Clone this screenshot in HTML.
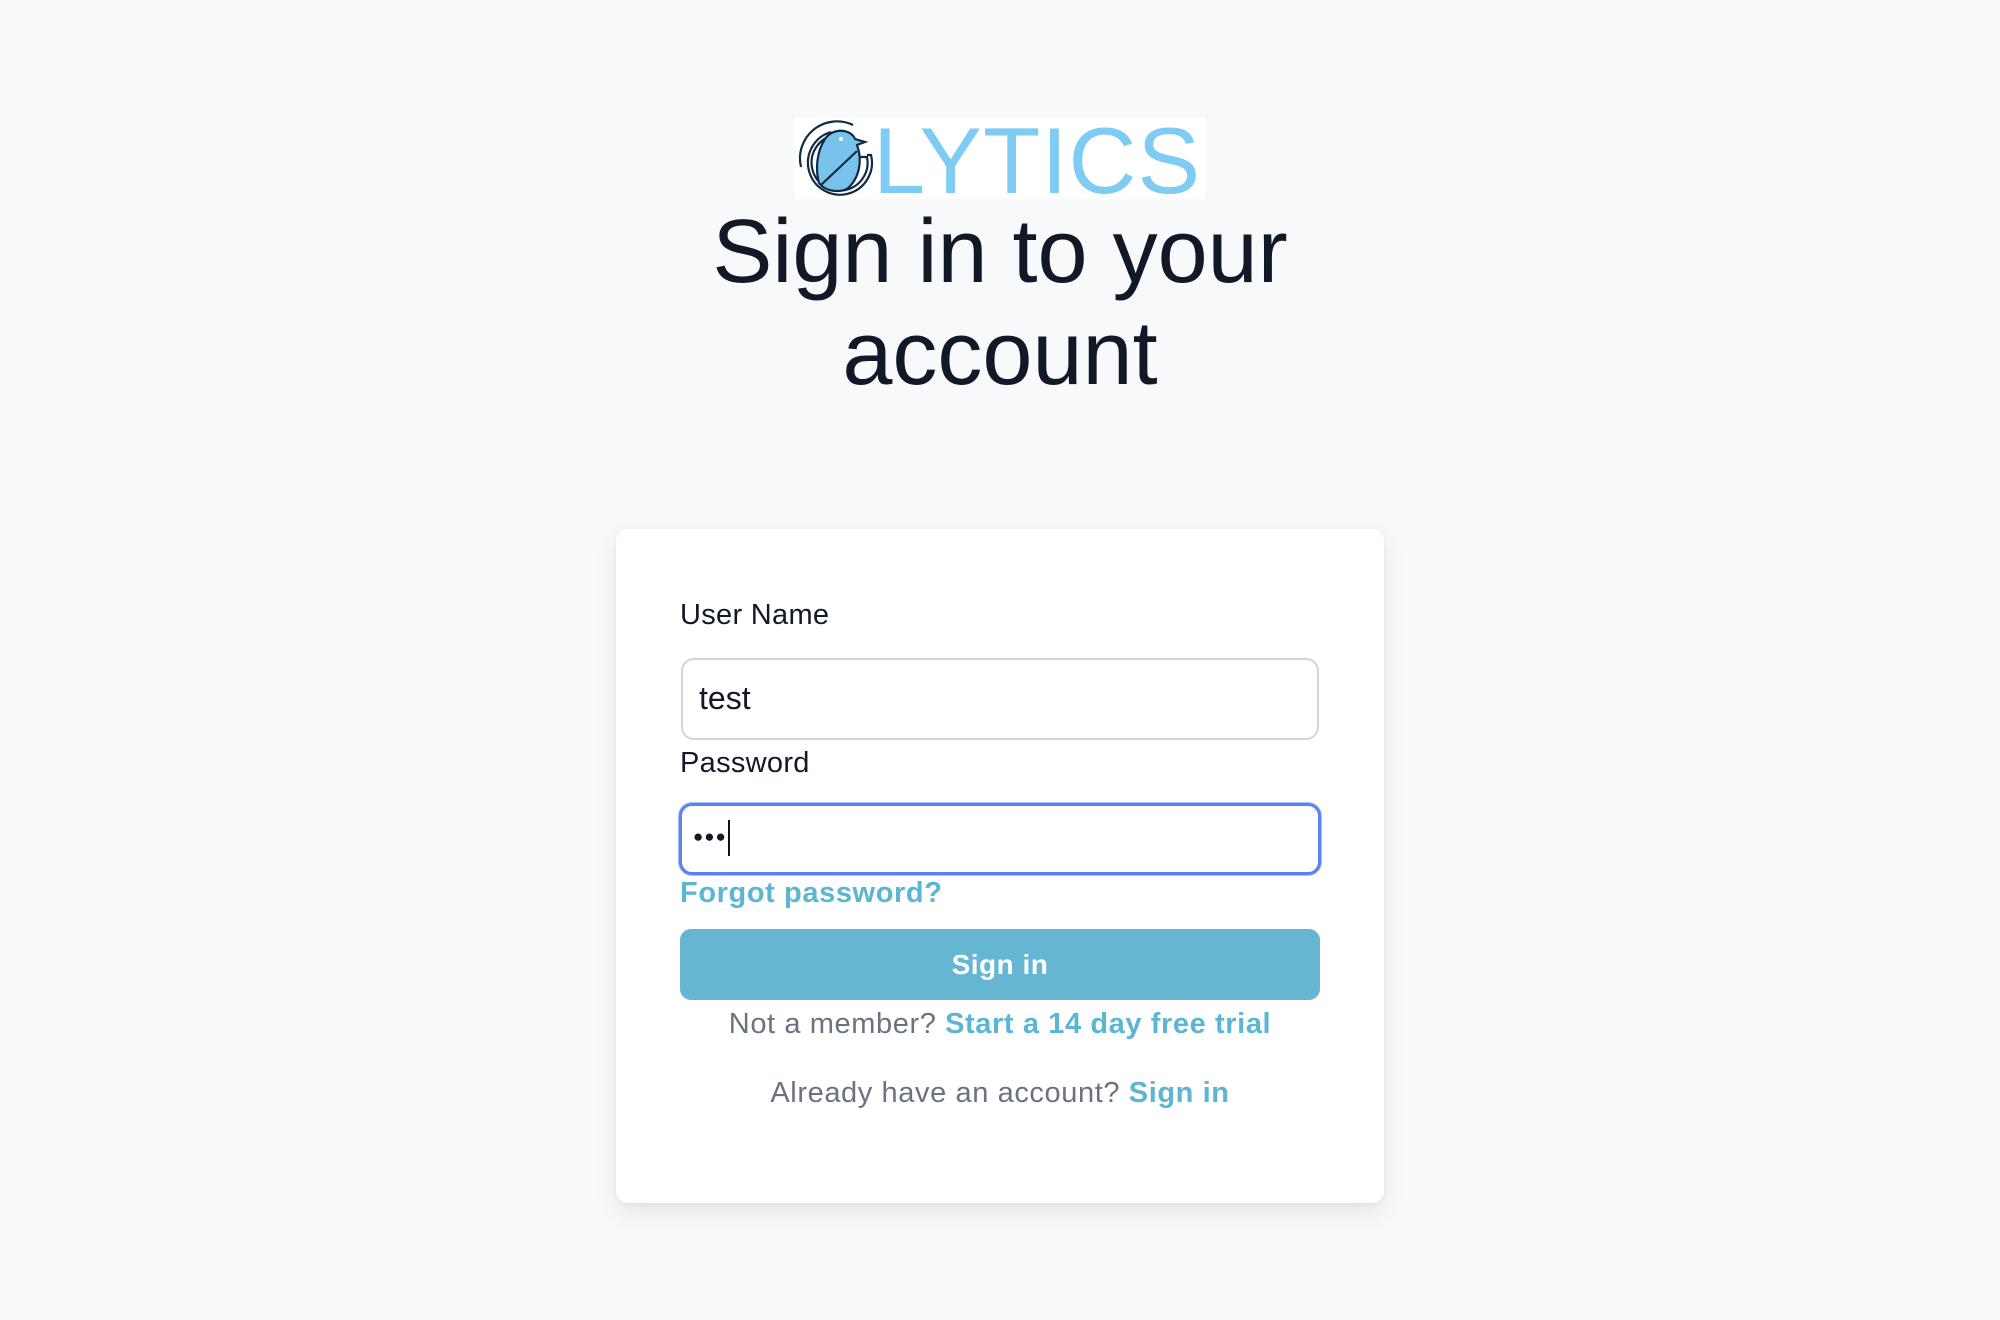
<!DOCTYPE html>
<html><head><meta charset="utf-8"><style>
html,body{margin:0;padding:0;width:2000px;height:1320px;background:#f8f9fb;font-family:"Liberation Sans",Arial,sans-serif;overflow:hidden}
.logo{position:absolute;left:795px;top:117px;width:410px;height:82px;background:#fff}
.logo svg{position:absolute;left:0;top:-2px}
.logo .t{position:absolute;left:78px;top:-6px;font-size:94px;color:#7ecbf3;line-height:100px;letter-spacing:1px}
h1{position:absolute;left:0;width:2000px;top:201px;margin:0;text-align:center;font-weight:400;font-size:90px;line-height:102px;color:#111827}
.card{position:absolute;left:616px;top:529px;width:768px;height:674px;background:#fff;border-radius:12px;box-shadow:0 10px 25px rgba(0,0,0,.08),0 2px 6px rgba(0,0,0,.04)}
.lbl{position:absolute;left:64px;font-size:29px;color:#111827;letter-spacing:.3px}
.inp{position:absolute;box-sizing:border-box;background:#fff}
.a{color:#5bb5d3;font-weight:700}
.c{position:absolute;left:0;width:768px;text-align:center;font-size:29px;color:#6b7280;letter-spacing:.6px}
</style></head><body>
<div class="logo">
<svg width="90" height="85" viewBox="0 0 90 85">
<g fill="none" stroke="#0f2a44" stroke-width="2.2">
<path d="M40 20 A28 28 0 1 0 72 42 L62 42"/>
<path d="M36 17 A32 32 0 1 0 76 40 L72 40"/>
<path d="M58 10 A37 37 0 0 0 6 52"/>
</g>
<path d="M30 24 C38 12 56 14 60 24 L70 27 L62 30 C68 46 64 64 52 74 C42 78 30 76 24 68 C20 54 22 36 30 24Z" fill="#78c3ec" stroke="#0f2a44" stroke-width="2.2"/>
<line x1="26" y1="70" x2="62" y2="36" stroke="#0f2a44" stroke-width="2.2"/>
<circle cx="46" cy="24" r="2" fill="#fff"/>
</svg>
<div class="t">LYTICS</div>
</div>
<h1>Sign in to your<br>account</h1>
<div class="card">
<div class="lbl" style="top:70px">User Name</div>
<div class="inp" style="left:65px;top:129px;width:638px;height:82px;border:2px solid #d1d5db;border-radius:13px;font-size:32px;color:#111827;padding:20px 0 0 16px">test</div>
<div class="lbl" style="top:218px">Password</div>
<div class="inp" style="left:63px;top:274px;width:642px;height:72px;border:3px solid #5b83ea;border-radius:13px;box-shadow:0 0 0 1px #a8bff5">
<span style="position:absolute;left:11px;top:21px;font-size:17px;color:#111827;letter-spacing:1px">●●●</span>
<span style="position:absolute;left:46px;top:14px;width:2px;height:36px;background:#111"></span></div>
<div class="lbl a" style="top:348px;letter-spacing:.6px">Forgot password?</div>
<div style="position:absolute;left:64px;top:400px;width:640px;height:71px;background:#65b6d3;border-radius:11px;color:#fff;font-weight:700;font-size:28px;text-align:center;line-height:71px;letter-spacing:.5px">Sign in</div>
<div class="c" style="top:479px">Not a member? <span class="a">Start a 14 day free trial</span></div>
<div class="c" style="top:548px">Already have an account? <span class="a">Sign in</span></div>
</div>
</body></html>
